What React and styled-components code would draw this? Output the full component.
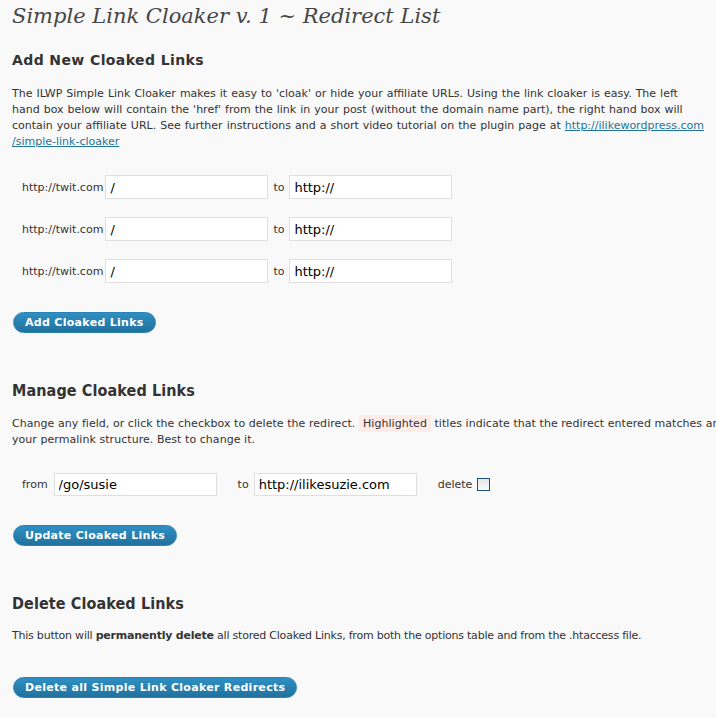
import React from "react";
import styled, { createGlobalStyle } from "styled-components";

const Global = createGlobalStyle`
  html, body { margin: 0; padding: 0; background: #f9f9f9; }
  body { overflow: hidden; font-family: "DejaVu Sans", Verdana, sans-serif; color: #333; }
`;

const Page = styled.div`
  padding: 0 10px 0 12px;
  width: 716px;
  box-sizing: border-box;
  overflow: hidden;
`;

const Title = styled.h2`
  margin: 0;
  font-family: "DejaVu Serif", Georgia, serif;
  font-style: italic;
  font-weight: normal;
  font-size: 21px;
  line-height: 32px;
  color: #464646;
`;

const Heading = styled.h3`
  margin: ${(p) => p.$top}px 0 0 0;
  font-family: ${(p) => (p.$condensed ? '"DejaVu Sans Condensed", Tahoma, sans-serif' : '"DejaVu Sans", Verdana, sans-serif')};
  font-size: ${(p) => (p.$condensed ? 16 : 14)}px;
  letter-spacing: ${(p) => (p.$condensed ? 0.1 : 0.4)}px;
  line-height: 20px;
  font-weight: bold;
  color: #333;
`;

const Para = styled.p`
  margin: ${(p) => p.$top}px 0 0 0;
  font-family: "DejaVu Sans", Verdana, sans-serif;
  font-size: 11px;
  line-height: 16px;
  letter-spacing: ${(p) => p.$ls || 0}px;
  word-spacing: ${(p) => p.$ws || 0}px;
  color: #333;
  white-space: nowrap;
`;

const Link = styled.a`
  color: #21759b;
  text-decoration: underline;
`;

const Highlight = styled.span`
  background: #ffebe8;
  padding: 2px 4px;
`;

const Rows = styled.div`
  margin-top: ${(p) => p.$top}px;
  padding-left: 10px;
  display: flex;
  flex-direction: column;
  gap: 18px;
`;

const Row = styled.div`
  display: flex;
  align-items: center;
`;

const Label = styled.span`
  font-family: "DejaVu Sans", Verdana, sans-serif;
  font-size: 11px;
  color: #333;
  margin-left: ${(p) => p.$ml || 0}px;
  margin-right: ${(p) => p.$mr || 0}px;
`;

const TextInput = styled.input`
  box-sizing: border-box;
  width: 163px;
  height: ${(p) => p.$h || 24}px;
  border: 1px solid #dfdfdf;
  background: #fff;
  padding: 0 4px;
  font-family: "DejaVu Sans", Verdana, sans-serif;
  font-size: 13px;
  color: #000;
  outline: none;
  border-radius: 0;
`;

const Check = styled.span`
  display: inline-block;
  box-sizing: border-box;
  width: 13px;
  height: 13px;
  border: 1px solid #1f4f7c;
  background: linear-gradient(#e6e6e6, #fafafa);
`;

const Button = styled.button`
  display: block;
  margin: ${(p) => p.$top}px 0 0 1px;
  height: 21px;
  padding: 0 11px;
  border: 1px solid #2a83b3;
  border-radius: 11px;
  background: linear-gradient(#2f8fc3, #21729d);
  color: #fff;
  font-family: "DejaVu Sans", Verdana, sans-serif;
  font-weight: bold;
  font-size: 11px;
  letter-spacing: 0.3px;
  line-height: 19px;
  cursor: pointer;
`;

const LinkRow = () => (
  <Row>
    <Label $mr={2}>http://twit.com</Label>
    <TextInput defaultValue="/" />
    <Label $ml={5} $mr={5}>to</Label>
    <TextInput defaultValue="http://" />
  </Row>
);

export default function App() {
  return (
    <Page>
      <Global />
      <Title>Simple Link Cloaker v. 1 ~ Redirect List</Title>

      <Heading $top={18}>Add New Cloaked Links</Heading>
      <Para $top={16} $ws={0.5}>
        The ILWP Simple Link Cloaker makes it easy to 'cloak' or hide your affiliate URLs. Using the link cloaker is easy. The left
        <br />
        hand box below will contain the 'href' from the link in your post (without the domain name part), the right hand box will
        <br />
        contain your affiliate URL. See further instructions and a short video tutorial on the plugin page at{" "}
        <Link href="#">
          http://ilikewordpress.com
          <br />
          /simple-link-cloaker
        </Link>
      </Para>
      <Rows $top={25}>
        <LinkRow />
        <LinkRow />
        <LinkRow />
      </Rows>
      <Button $top={29}>Add Cloaked Links</Button>

      <Heading $top={48} $condensed>Manage Cloaked Links</Heading>
      <Para $top={15} $ls={0.05}>
        Change any field, or click the checkbox to delete the redirect. <Highlight>Highlighted</Highlight> titles indicate that the redirect entered matches an
        <br />
        your permalink structure. Best to change it.
      </Para>
      <Rows $top={25}>
        <Row>
          <Label $mr={6}>from</Label>
          <TextInput $h={23} defaultValue="/go/susie" />
          <Label $ml={21} $mr={5}>to</Label>
          <TextInput $h={23} defaultValue="http://ilikesuzie.com" />
          <Label $ml={21} $mr={5}>delete</Label>
          <Check />
        </Row>
      </Rows>
      <Button $top={29}>Update Cloaked Links</Button>

      <Heading $top={48} $condensed>Delete Cloaked Links</Heading>
      <Para $top={14} $ls={-0.22}>
        This button will <b>permanently delete</b> all stored Cloaked Links, from both the options table and from the .htaccess file.
      </Para>
      <Button $top={33}>Delete all Simple Link Cloaker Redirects</Button>
    </Page>
  );
}
